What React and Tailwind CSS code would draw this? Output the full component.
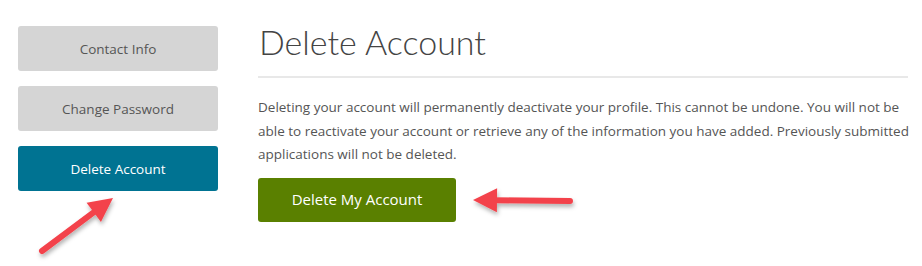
import React from 'react';

const body = { fontFamily: '"Open Sans", Lato, Arial, sans-serif' };
const head = { fontFamily: 'Lato, "Open Sans", Arial, sans-serif' };

function NavButton({ label, active }) {
  return (
    <div
      className={`h-[45px] w-[200px] rounded-[3px] flex items-center justify-center pt-[2px] text-[13.5px] ${
        active ? 'bg-[#007392] text-white' : 'bg-[#d5d5d5] text-[#555]'
      }`}
    >
      {label}
    </div>
  );
}

function Arrow({ x1, y1, x2, y2, className }) {
  // red annotation arrow, tail at (x1,y1), tip at (x2,y2)
  const dx = x2 - x1;
  const dy = y2 - y1;
  const len = Math.sqrt(dx * dx + dy * dy);
  const ux = dx / len;
  const uy = dy / len;
  const head = 24;
  const half = 12;
  const bx = x2 - ux * head;
  const by = y2 - uy * head;
  const p1 = `${bx - uy * half},${by + ux * half}`;
  const p2 = `${bx + uy * half},${by - ux * half}`;
  return (
    <svg className={className} width="922" height="266" viewBox="0 0 922 266">
      <defs>
        <filter id="sh" x="-20%" y="-20%" width="140%" height="160%">
          <feDropShadow dx="1" dy="3" stdDeviation="2" floodColor="#000" floodOpacity="0.3" />
        </filter>
      </defs>
      <g filter="url(#sh)">
        <line x1={x1} y1={y1} x2={bx + ux * 4} y2={by + uy * 4} stroke="#f3434b" strokeWidth="6" strokeLinecap="round" />
        <polygon points={`${x2},${y2} ${p1} ${p2}`} fill="#f3434b" />
      </g>
    </svg>
  );
}

export default function App() {
  return (
    <div className="relative w-[922px] h-[266px] bg-white overflow-hidden flex" style={body}>
      <div className="pl-[18px] pt-[26px] flex flex-col gap-[15px]">
        <NavButton label="Contact Info" />
        <NavButton label="Change Password" />
        <NavButton label="Delete Account" active />
      </div>

      <div className="ml-[40px] w-[650px] pt-[22px]">
        <h1 className="text-[34px] font-light leading-[40px] text-[#444] pl-[1px]" style={head}>Delete Account</h1>
        <div className="mt-[14px] h-[2px] bg-[#e8e8e8]" />
        <p className="mt-[18px] w-[660px] text-[13.5px] leading-[23.5px] text-[#555]">
          Deleting your account will permanently deactivate your profile. This cannot be undone. You will not be
          able to reactivate your account or retrieve any of the information you have added. Previously submitted
          applications will not be deleted.
        </p>
        <button className="mt-[11px] h-[44px] w-[198px] rounded-[3px] bg-[#5a8000] text-white text-[15px]">
          Delete My Account
        </button>
      </div>

      <Arrow className="absolute left-0 top-0 pointer-events-none" x1={42} y1={251} x2={113} y2={198} />
      <Arrow className="absolute left-0 top-0 pointer-events-none" x1={570} y1={201} x2={473} y2={200} />
    </div>
  );
}
